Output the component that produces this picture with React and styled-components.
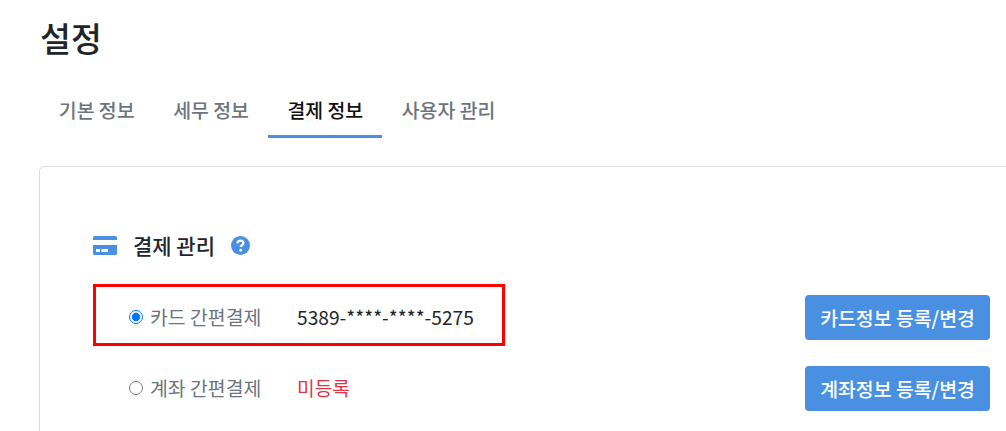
import React from "react";
import styled, { createGlobalStyle } from "styled-components";

const GlobalStyle = createGlobalStyle`
  html, body {
    margin: 0;
    padding: 0;
    background: #fff;
    overflow: hidden;
  }
  body {
    font-family: "Noto Sans CJK KR", "Noto Sans", sans-serif;
  }
`;

const Page = styled.div`
  width: 1006px;
  height: 431px;
  overflow: hidden;
  box-sizing: border-box;
  padding: 16px 0 0 40px;
`;

const Title = styled.h1`
  margin: 0;
  height: 44px;
  font-size: 33.6px;
  line-height: 44px;
  font-weight: 500;
  color: #212529;
`;

const Tabs = styled.ul`
  list-style: none;
  display: flex;
  margin: 24px 0 0 -0.5px;
  padding: 0;
  height: 54px;
`;

const Tab = styled.li`
  box-sizing: border-box;
  padding: 0 19.3px;
  height: 54px;
  line-height: 52px;
  font-size: 19.4px;
  font-weight: 500;
  white-space: nowrap;
  color: ${props => (props.active ? "#111" : "#6c757d")};
  border-bottom: 3px solid ${props => (props.active ? "#4a90e2" : "transparent")};
`;

const Card = styled.section`
  box-sizing: border-box;
  width: 1100px;
  height: 400px;
  margin: 28px 0 0 -1px;
  padding: 62px 0 0 53px;
  border: 1px solid #ddd;
  border-radius: 5px;
`;

const Heading = styled.div`
  display: flex;
  align-items: center;
  height: 32px;
  font-size: 21px;
  font-weight: 500;
  color: #212529;
`;

const HeadingText = styled.span`
  margin: 0 16px 0 16px;
`;

const Rows = styled.div`
  width: 897px;
  margin-top: 34px;
  display: flex;
  flex-direction: column;
  gap: 26px;
`;

const Row = styled.div`
  position: relative;
  display: flex;
  align-items: center;
  justify-content: space-between;
  height: 45px;
  padding-left: 36px;
`;

const Marker = styled.div`
  position: absolute;
  top: -11px;
  left: 0;
  box-sizing: border-box;
  width: 412px;
  height: 62px;
  border: 3px solid #f00;
`;

const Field = styled.div`
  display: flex;
  align-items: center;
  padding-bottom: 2px;
`;

const Label = styled.label`
  display: flex;
  align-items: center;
  width: 168px;
  font-size: 19.4px;
  color: #6c757d;
`;

const Radio = styled.input.attrs({ type: "radio", readOnly: true })`
  flex: none;
  width: 14px;
  height: 14px;
  margin: 0 7px 0 0;
`;

const Value = styled.span`
  font-size: 19.2px;
  color: ${props => (props.missing ? "#dc3545" : "#212529")};
`;

const Button = styled.button`
  width: 185px;
  height: 45px;
  padding: 0;
  border: 0;
  border-radius: 4px;
  background: #4a90e2;
  color: #fff;
  font-family: inherit;
  font-size: 19.4px;
  font-weight: 500;
`;

const CardIcon = () => (
  <svg width="24" height="19" viewBox="0 0 24 19">
    <path
      fill="#4a90e2"
      fillRule="evenodd"
      d="M1.500 0h21A1.500 1.500 0 0 1 24 1.500V4H0V1.500A1.500 1.500 0 0 1 1.500 0zM0 9h24v8.500a1.500 1.500 0 0 1-1.500 1.500h-21A1.500 1.500 0 0 1 0 17.500zm3 4v3h4v-3zm5.500 0v3H15v-3z"
    />
  </svg>
);

const HelpIcon = () => (
  <svg width="19" height="19" viewBox="0 0 19 19">
    <circle cx="9.500" cy="9.500" r="9.500" fill="#4a90e2" />
    <path
      d="M6.500 7.300c.1-1.700 1.400-2.700 3-2.700 1.700 0 2.900 1 2.900 2.400 0 1.100-.6 1.700-1.500 2.300-.8.500-1.200.9-1.200 1.800"
      fill="none"
      stroke="#fff"
      strokeWidth="2.200"
    />
    <circle cx="9.700" cy="14.200" r="1.400" fill="#fff" />
  </svg>
);

export default function App() {
  return (
    <Page>
      <GlobalStyle />
      <Title>설정</Title>
      <Tabs>
        <Tab>기본 정보</Tab>
        <Tab>세무 정보</Tab>
        <Tab active>결제 정보</Tab>
        <Tab>사용자 관리</Tab>
      </Tabs>
      <Card>
        <Heading>
          <CardIcon />
          <HeadingText>결제 관리</HeadingText>
          <HelpIcon />
        </Heading>
        <Rows>
          <Row>
            <Marker />
            <Field>
              <Label>
                <Radio name="pay" defaultChecked />
                카드 간편결제
              </Label>
              <Value>5389-****-****-5275</Value>
            </Field>
            <Button>카드정보 등록/변경</Button>
          </Row>
          <Row>
            <Field>
              <Label>
                <Radio name="pay" />
                계좌 간편결제
              </Label>
              <Value missing>미등록</Value>
            </Field>
            <Button>계좌정보 등록/변경</Button>
          </Row>
        </Rows>
      </Card>
    </Page>
  );
}
